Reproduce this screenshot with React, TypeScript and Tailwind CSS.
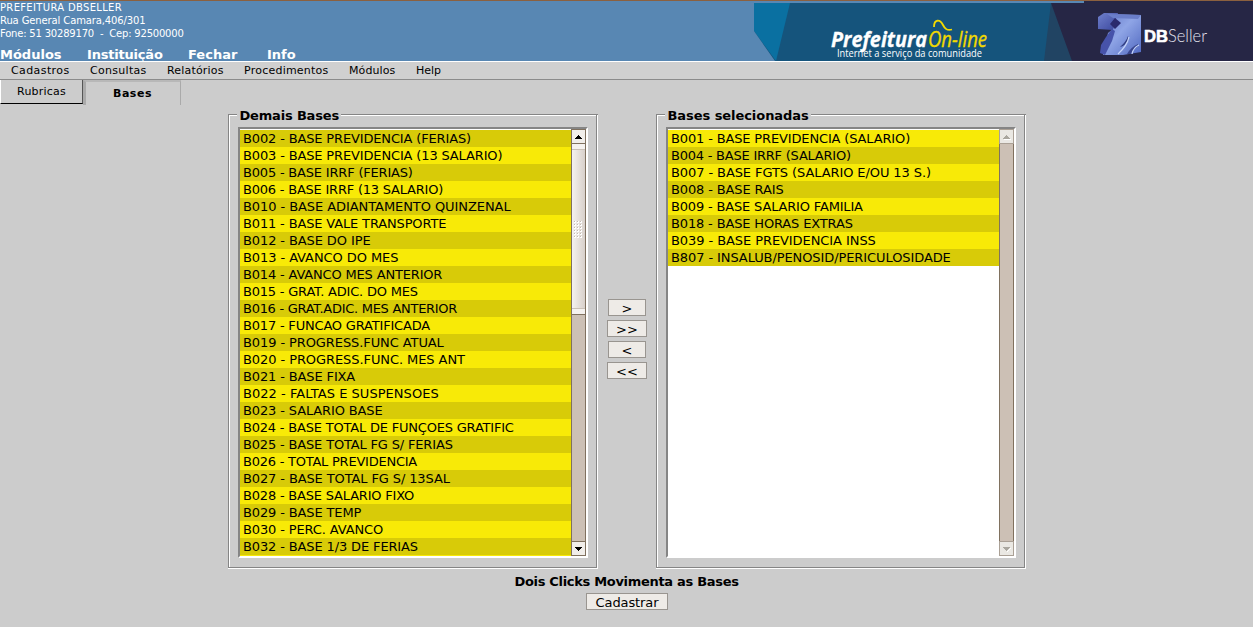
import React from "react";

type Item = [label: string, adjust: number];

// Each entry carries the total width adjustment, in pixels, of its label.
const available: Item[] = [
  ["B002 - BASE PREVIDENCIA (FERIAS)", -0.5],
  ["B003 - BASE PREVIDENCIA (13 SALARIO)", -0.5],
  ["B005 - BASE IRRF (FERIAS)", -1.5],
  ["B006 - BASE IRRF (13 SALARIO)", -2.5],
  ["B010 - BASE ADIANTAMENTO QUINZENAL", 2],
  ["B011 - BASE VALE TRANSPORTE", -0.5],
  ["B012 - BASE DO IPE", 0.5],
  ["B013 - AVANCO DO MES", 1],
  ["B014 - AVANCO MES ANTERIOR", -1],
  ["B015 - GRAT. ADIC. DO MES", -2],
  ["B016 - GRAT.ADIC. MES ANTERIOR", -4.5],
  ["B017 - FUNCAO GRATIFICADA", -1.5],
  ["B019 - PROGRESS.FUNC ATUAL", 1],
  ["B020 - PROGRESS.FUNC. MES ANT", 1.5],
  ["B021 - BASE FIXA", 0],
  ["B022 - FALTAS E SUSPENSOES", 4.5],
  ["B023 - SALARIO BASE", 0],
  ["B024 - BASE TOTAL DE FUNÇOES GRATIFIC", -2.5],
  ["B025 - BASE TOTAL FG S/ FERIAS", -1],
  ["B026 - TOTAL PREVIDENCIA", -2.5],
  ["B027 - BASE TOTAL FG S/ 13SAL", 0.5],
  ["B028 - BASE SALARIO FIXO", -1.5],
  ["B029 - BASE TEMP", 0],
  ["B030 - PERC. AVANCO", 0],
  ["B032 - BASE 1/3 DE FERIAS", 0],
];

const selected: Item[] = [
  ["B001 - BASE PREVIDENCIA (SALARIO)", -0.5],
  ["B004 - BASE IRRF (SALARIO)", -2.5],
  ["B007 - BASE FGTS (SALARIO E/OU 13 S.)", 1.5],
  ["B008 - BASE RAIS", 0],
  ["B009 - BASE SALARIO FAMILIA", -1],
  ["B018 - BASE HORAS EXTRAS", -0.5],
  ["B039 - BASE PREVIDENCIA INSS", 1.5],
  ["B807 - INSALUB/PENOSID/PERICULOSIDADE", 1.5],
];

function Banner() {
  return (
    <svg width="499" height="60" viewBox="0 0 499 60" className="block shrink-0">
      <defs>
        <linearGradient id="cube" x1="0" y1="0" x2="1" y2="1">
          <stop offset="0" stopColor="#6478c8" />
          <stop offset="0.45" stopColor="#8fa5e6" />
          <stop offset="1" stopColor="#5068c0" />
        </linearGradient>
        <linearGradient id="side" x1="0" y1="0" x2="1" y2="1">
          <stop offset="0" stopColor="#6f80cc" />
          <stop offset="1" stopColor="#3a469c" />
        </linearGradient>
        <filter id="soft"><feGaussianBlur stdDeviation="0.7" /></filter>
      </defs>
      <rect width="499" height="60" fill="#15547c" />
      <rect width="330" height="2" fill="#5887b3" />
      <path d="M0 2H36L22 60L0 30Z" fill="#0a70a1" />
      <path d="M0 30L21 60H0Z" fill="#5887b3" />
      <path d="M297 2L290 60H320Z" fill="#214463" />
      <path d="M297 2H330V0H499V60H318Z" fill="#262645" />
      <g filter="url(#soft)">
        <path d="M358 13L387 14V51L369 54H349L354 32L359 28Z" fill="url(#cube)" />
        <path d="M344 16L350 12H364L362 18L359 29L344 28Z" fill="url(#side)" />
        <path d="M358 28L352 36L347 44L346 52L351 54L358 40L361 30Z" fill="#4653aa" />
        <path d="M353 13L387 14L384 18L359 17Z" fill="#6b7eca" />
        <path d="M361 17L367 22L361 28L356 23Z" fill="#29296d" />
        <path d="M374 35Q372 41 366 46Q371 45 375 38Z" fill="#303c80" />
        <path d="M384 43Q377 46 373 53H377Q379 48 384 45Z" fill="#38458d" />
        <path d="M375 36Q373 45 364 53M385 44Q379 47 378 53" fill="none" stroke="#c4d3f8" strokeWidth="1.2" />
      </g>
      <text x="77" y="45.5" textLength="96" lengthAdjust="spacingAndGlyphs" fill="#fff" fontFamily="Open Sans" fontWeight="700" stroke="#fff" strokeWidth="0.3" fontStyle="italic" fontSize="21">Prefeitura</text>
      <text x="174" y="45.5" textLength="59" lengthAdjust="spacingAndGlyphs" fill="#f2d900" stroke="#f2d900" strokeWidth="0.35" fontFamily="Open Sans" fontStyle="italic" fontSize="21">On-line</text>
      <path d="M180 26C180 18 186 18 189 24C191 28 193 30 198 28.5" fill="none" stroke="#f2d900" strokeWidth="1.8" />
      <text x="83" y="56" textLength="145" lengthAdjust="spacingAndGlyphs" fill="#fff" fontFamily="Open Sans" fontWeight="500" fontSize="10">Internet a serviço da comunidade</text>
      <text x="390" y="41" textLength="24" lengthAdjust="spacingAndGlyphs" fill="#fff" fontFamily="Liberation Sans" fontWeight="700" stroke="#fff" strokeWidth="0.6" fontSize="17">DB</text>
      <text x="414" y="41" textLength="39" lengthAdjust="spacingAndGlyphs" fill="#e4e4ee" fontFamily="Lato" fontWeight="300" fontSize="18">Seller</text>
    </svg>
  );
}

function Arrow({ up, disabled }: { up?: boolean; disabled?: boolean }) {
  return (
    <div className={`flex h-[15px] w-[15px] shrink-0 items-center justify-center border ${disabled ? "border-[#aaa095] bg-[#eae8e3]" : "border-[#80715f] bg-[#f1eeea]"}`}>
      <svg width="9" height="6" viewBox="0 0 9 6" shapeRendering="crispEdges">
        {disabled && <path d={up ? "M2 5H9V6H2Z" : "M5 5H6V4H7V3H8V2H9V3H8V4H7V5H6V6H5Z"} fill="#fff" />}
        <path d={up ? "M4 1H5V2H6V3H7V4H8V5H1V4H2V3H3V2H4Z" : "M1 1H8V2H7V3H6V4H5V5H4V4H3V3H2V2H1Z"} fill={disabled ? "#aaa79f" : "#000"} />
      </svg>
    </div>
  );
}

function Scrollbar({ disabled }: { disabled?: boolean }) {
  return (
    <div className="flex h-[427px] w-[15px] shrink-0 flex-col bg-[#ccc0b5]">
      <Arrow up disabled={disabled} />
      {disabled ? (
        <div className="flex-1 border-x border-[#80715f]" />
      ) : (
        <>
          <div className="flex h-[171px] flex-col items-center justify-between border-x border-b border-[#80715f] bg-linear-to-r from-[#f5f2ef] to-[#d8d0ca]">
            <div className="h-[6px] w-full border-b border-[#c9c0b7] bg-[#f5f2ef]" />
            <svg width="9" height="17" shapeRendering="crispEdges">
              {[0, 1, 2, 3, 4, 5].map((r) => [0, 1, 2].map((c) => (
                <g key={`${r}-${c}`}>
                  <rect x={c * 3} y={r * 3} width="2" height="2" fill="#fff" />
                  <rect x={c * 3} y={r * 3} width="1" height="1" fill="#c4bab1" />
                </g>
              )))}
            </svg>
            <div className="h-[6px] w-full border-t border-[#c9c0b7] bg-[#f5f2ef]" />
          </div>
          <div className="flex-1 border-x border-[#80715f]" />
        </>
      )}
      <Arrow disabled={disabled} />
    </div>
  );
}

function ListPanel({ title, items, brightFirst, disabled }: { title: string; items: Item[]; brightFirst?: boolean; disabled?: boolean }) {
  return (
    <fieldset className="flex h-[463px] w-[370px] flex-col">
      <div className="flex h-[14px] items-start">
        <div className="mt-[8px] h-[7px] w-[9px] shrink-0 border-t border-l border-[#858585] shadow-[inset_1px_1px_#fff]" />
        <div className={`mt-px shrink-0 pr-[2px] pl-[3px] text-[13px] leading-[17px] font-bold whitespace-nowrap ${brightFirst ? "tracking-[-0.06px]" : "tracking-[-0.18px]"}`}>{title}</div>
        <div className="mt-[8px] h-[7px] flex-1 border-t border-[#858585] shadow-[inset_-1px_0_#fff,inset_-2px_0_#858585,inset_0_1px_#fff]" />
      </div>
      <div className="flex-1 border-r border-b border-white">
        <div className="h-full border-r border-b border-l border-[#858585] pt-[7px] pl-[9px] shadow-[inset_1px_0_#fff]">
          <div className="flex h-[431px] w-[350px] border-2 border-t-[#858585] border-r-white border-b-white border-l-[#858585] bg-white">
            <div className="min-w-0 flex-1 pt-px">
              <div className={brightFirst ? "" : "h-[426px] bg-[#f8ea07]"}>
                {items.map(([item, adjust], i) => (
                  <div
                    key={item}
                    style={{ letterSpacing: `${(-0.13 + adjust / item.length).toFixed(3)}px` }}
                    className={`h-[17px] pl-[3.5px] text-[13px] leading-[17px] whitespace-nowrap ${(i % 2 === 0) === !!brightFirst ? "bg-[#f8ea07]" : "bg-[#d8cb08]"}`}
                  >
                    {item}
                  </div>
                ))}
              </div>
            </div>
            <Scrollbar disabled={disabled} />
          </div>
        </div>
      </div>
    </fieldset>
  );
}

const button = "flex h-[17px] items-center justify-center border border-[#999590] bg-[#eeebe7] text-[13px] leading-[17px]";

export default function App() {
  return (
    <div className="flex h-[627px] w-[1253px] flex-col overflow-hidden bg-[#ccc] font-['DejaVu_Sans',sans-serif] text-black">
      <header className="flex h-[61px] justify-between border-t border-[#8b603f] bg-[#5887b3] text-white">
        <div>
          <div className="h-[45px] text-[10px] leading-[13px] whitespace-pre">
            <div className="tracking-[0.33px]">PREFEITURA DBSELLER</div>
            <div className="tracking-[-0.12px]">Rua General Camara,406/301</div>
            <div className="tracking-[-0.2px]">{"Fone: 51 30289170  -  Cep: 92500000"}</div>
          </div>
          <nav className="flex text-[13px] leading-[17px] font-bold">
            <span className="w-[87px]">Módulos</span>
            <span className="w-[101px] tracking-[-0.2px]">Instituição</span>
            <span className="w-[79px]">Fechar</span>
            <span>Info</span>
          </nav>
        </div>
        <Banner />
      </header>
      <nav className="flex h-[19px] border-t border-b border-t-white border-b-[#8b8b8b] bg-[#d0d0d0] pl-[11px] text-[11px] leading-[17px]">
        <span className="w-[79px] tracking-[0.4px]">Cadastros</span>
        <span className="w-[77px] tracking-[0.3px]">Consultas</span>
        <span className="w-[77px] tracking-[0.18px]">Relatórios</span>
        <span className="w-[105px] tracking-[0.23px]">Procedimentos</span>
        <span className="w-[67px] tracking-[0.1px]">Módulos</span>
        <span>Help</span>
      </nav>
      <div className="flex h-[26px] text-[11px]">
        <div className="h-[24px] w-[83px] border-r border-b border-l border-r-[#555] border-b-black border-l-white text-center leading-[23px] tracking-[0.22px]">Rubricas</div>
        <div className="h-[25px] w-[98px] border-t-2 border-r border-l-3 border-t-[#b8b8b8] border-r-[#aaa] border-l-[#aaa] pr-px text-center leading-[23px] font-bold tracking-[0.5px]">Bases</div>
      </div>
      <main className="flex flex-col items-center">
        <div className="flex w-[798px] justify-between">
          <ListPanel title="Demais Bases" items={available} />
          <div className="flex flex-col items-center gap-[4px] pt-[193px]">
            <button className={`${button} w-[38px] pt-px pl-px`}>&gt;</button>
            <button className={`${button} w-[40px] pt-px pl-px`}>&gt;&gt;</button>
            <button className={`${button} w-[38px] pt-px pl-px`}>&lt;</button>
            <button className={`${button} w-[40px] pt-px pl-px`}>&lt;&lt;</button>
          </div>
          <ListPanel title="Bases selecionadas" items={selected} brightFirst disabled />
        </div>
        <div className="mt-[4px] text-[13px] leading-[17px] font-bold tracking-[-0.31px]">Dois Clicks Movimenta as Bases</div>
        <button className={`${button} mt-[3px] w-[82px] pt-[2px] pl-px tracking-[-0.1px]`}>Cadastrar</button>
      </main>
    </div>
  );
}
